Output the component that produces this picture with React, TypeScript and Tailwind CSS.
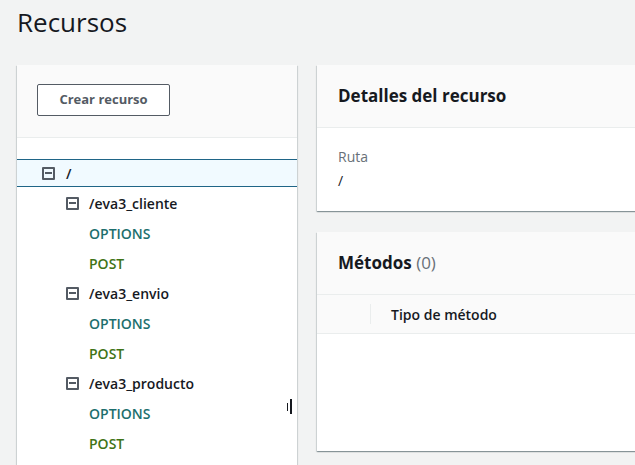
import type { ReactNode } from 'react';

type Node = { path: string; methods: string[] };

const children: Node[] = [
  { path: '/eva3_cliente', methods: ['OPTIONS', 'POST'] },
  { path: '/eva3_envio', methods: ['OPTIONS', 'POST'] },
  { path: '/eva3_producto', methods: ['OPTIONS', 'POST'] },
];

function MinusBox() {
  return (
    <span className="flex h-[13px] w-[13px] items-center justify-center border-2 border-[#545b64] rounded-[1px]">
      <span className="h-[2px] w-[7px] bg-[#545b64]" />
    </span>
  );
}

function methodColor(m: string) {
  return m === 'POST' ? 'text-[#3f7417]' : 'text-[#1d6f6e]';
}

function Panel({ children, className = '' }: { children: ReactNode; className?: string }) {
  return (
    <div className={`bg-white shadow-[0_1px_1px_0_rgba(0,28,36,0.3),1px_1px_1px_0_rgba(0,28,36,0.1),-1px_1px_1px_0_rgba(0,28,36,0.1)] ${className}`}>
      {children}
    </div>
  );
}

export default function App() {
  return (
    <div
      className="h-[465px] w-[635px] overflow-hidden bg-[#f2f3f3] text-[#16191f]"
      style={{ fontFamily: '"Open Sans", "Noto Sans", Arial, sans-serif' }}
    >
      <h1 className="pl-[17px] pt-[3px] text-[26px] leading-[38px]">Recursos</h1>

      <div className="mt-[24px] flex gap-[20px] pl-[17px]">
        {/* resource tree */}
        <Panel className="relative h-[420px] w-[280px] shrink-0">
          <div className="h-[73px] border-b border-[#eaeded] bg-[#fafafa] pl-[20px] pt-[19px]">
            <button className="h-[32px] w-[133px] rounded-[2px] border border-[#545b64] bg-white text-[13px] font-bold text-[#545b64]">
              Crear recurso
            </button>
          </div>

          <div className="pt-[21px]">
            <div className="flex h-[28px] items-center gap-[11px] border-y border-[#1f6587] bg-[#f1faff] pl-[25px]">
              <MinusBox />
              <span className="text-[14px] font-semibold">/</span>
            </div>

            <div className="pt-[1px]">
              {children.map((c) => (
                <div key={c.path}>
                  <div className="flex h-[30px] items-center gap-[10px] pl-[49px]">
                    <MinusBox />
                    <span className="text-[14px] font-semibold">{c.path}</span>
                  </div>
                  {c.methods.map((m) => (
                    <div
                      key={m}
                      className={`flex h-[30px] items-center pl-[72px] text-[14px] font-semibold ${methodColor(m)}`}
                    >
                      {m}
                    </div>
                  ))}
                </div>
              ))}
            </div>
          </div>

          {/* resize handle */}
          <div className="absolute left-[270px] top-[334px] flex items-center gap-[2px]">
            <span className="h-[8px] w-[1px] bg-[#16191f]" />
            <span className="h-[15px] w-[2px] bg-[#16191f]" />
          </div>
        </Panel>

        {/* right column */}
        <div className="flex w-[420px] shrink-0 flex-col gap-[21px]">
          <Panel className="h-[146px]">
            <div className="flex h-[63px] items-center border-b border-[#eaeded] bg-[#fafafa] pl-[21px]">
              <h2 className="text-[17px] font-bold">Detalles del recurso</h2>
            </div>
            <div className="pl-[21px] pt-[17px]">
              <div className="text-[14px] leading-[24px] text-[#687078]">Ruta</div>
              <div className="text-[14px] leading-[24px]">/</div>
            </div>
          </Panel>

          <Panel className="h-[219px]">
            <div className="flex h-[63px] items-center border-b border-[#eaeded] bg-[#fafafa] pl-[21px]">
              <h2 className="text-[17px] font-bold">
                Métodos <span className="font-normal text-[#687078]">(0)</span>
              </h2>
            </div>
            <div className="flex h-[39px] items-center border-b border-[#eaeded] bg-[#fafafa]">
              <div className="w-[54px] self-stretch py-[9px]">
                <div className="ml-auto h-full w-[1px] bg-[#eaeded]" />
              </div>
              <span className="pl-[20px] text-[14px] font-semibold">Tipo de método</span>
            </div>
          </Panel>
        </div>
      </div>
    </div>
  );
}
